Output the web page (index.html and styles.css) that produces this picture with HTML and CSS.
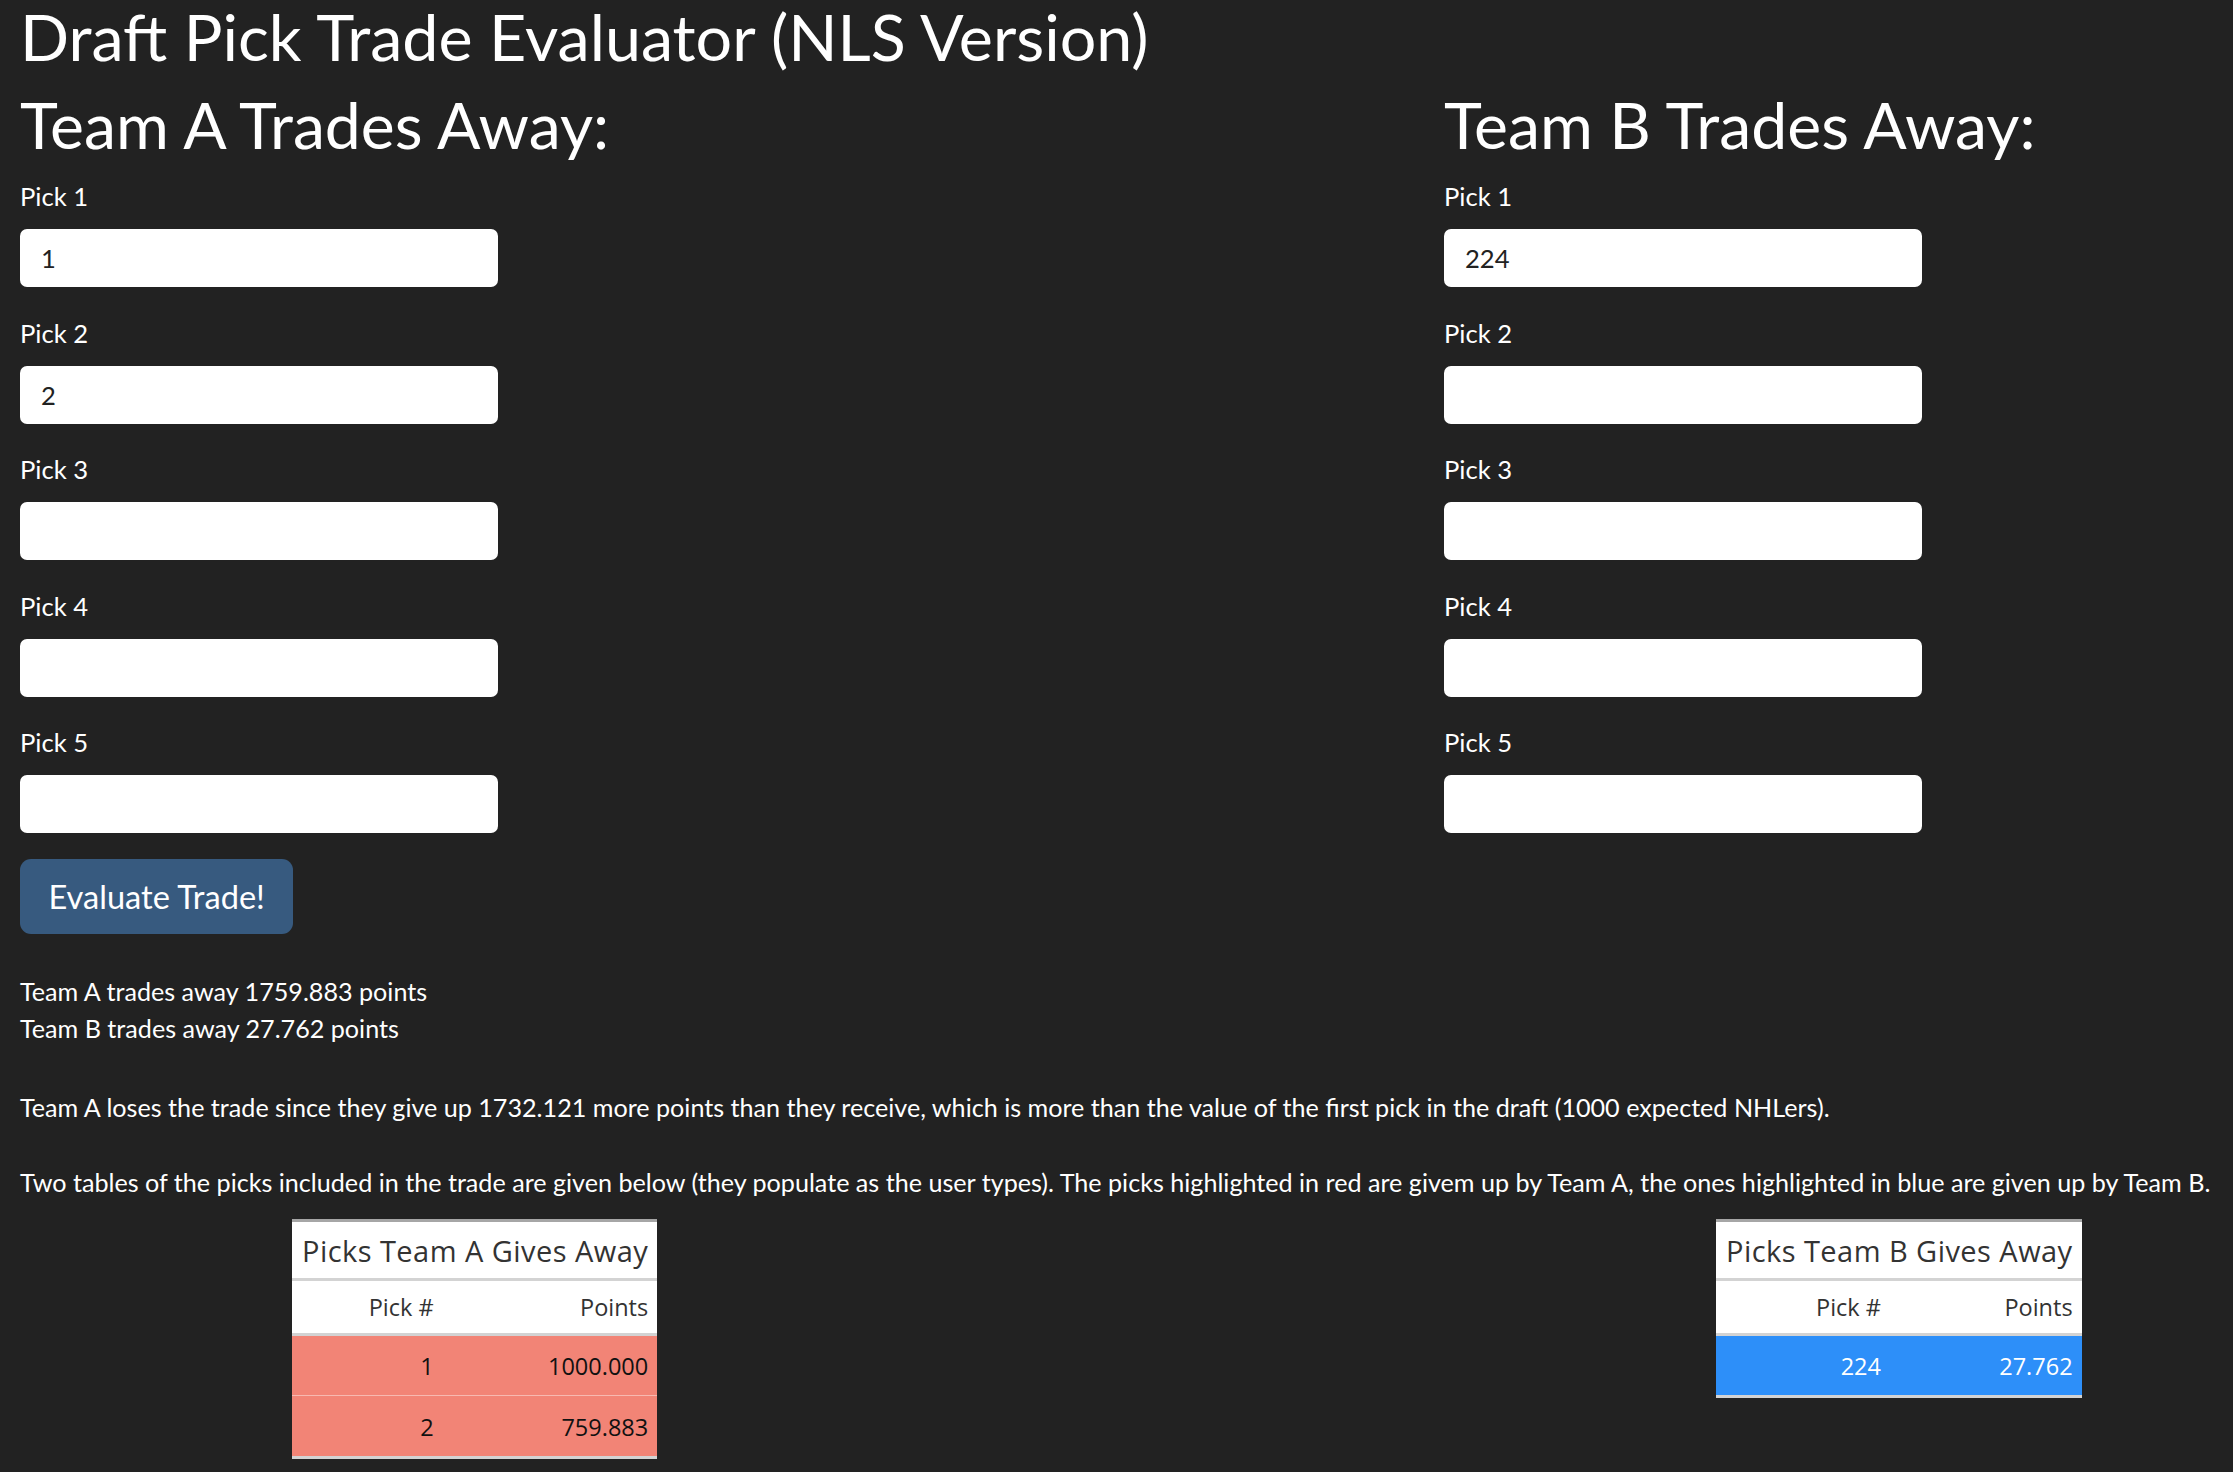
FILE: index.html
```html
<!DOCTYPE html>
<html lang="en">
<head>
<meta charset="utf-8">
<title>Draft Pick Trade Evaluator (NLS Version)</title>
<link rel="stylesheet" href="styles.css">
</head>
<body>
<div class="page">
  <h1 class="title">Draft Pick Trade Evaluator (NLS Version)</h1>
  <div class="cols">
    <div class="col">
      <h2 class="team">Team A Trades Away:</h2>
      <div class="field"><label class="lbl">Pick 1</label><input class="inp" type="text" value="1"></div>
      <div class="field"><label class="lbl">Pick 2</label><input class="inp" type="text" value="2"></div>
      <div class="field"><label class="lbl">Pick 3</label><input class="inp" type="text" value=""></div>
      <div class="field"><label class="lbl">Pick 4</label><input class="inp" type="text" value=""></div>
      <div class="field"><label class="lbl">Pick 5</label><input class="inp" type="text" value=""></div>
      <button class="btn" type="button">Evaluate Trade!</button>
    </div>
    <div class="col">
      <h2 class="team">Team B Trades Away:</h2>
      <div class="field"><label class="lbl">Pick 1</label><input class="inp" type="text" value="224"></div>
      <div class="field"><label class="lbl">Pick 2</label><input class="inp" type="text" value=""></div>
      <div class="field"><label class="lbl">Pick 3</label><input class="inp" type="text" value=""></div>
      <div class="field"><label class="lbl">Pick 4</label><input class="inp" type="text" value=""></div>
      <div class="field"><label class="lbl">Pick 5</label><input class="inp" type="text" value=""></div>
    </div>
  </div>
  <div class="results">
    <p class="para p1">Team A trades away 1759.883 points<br>Team B trades away 27.762 points</p>
    <p class="para p2">Team A loses the trade since they give up 1732.121 more points than they receive, which is more than the value of the first pick in the draft (1000 expected NHLers).</p>
    <p class="para p3">Two tables of the picks included in the trade are given below (they populate as the user types). The picks highlighted in red are givem up by Team A, the ones highlighted in blue are given up by Team B.</p>
  </div>
  <div class="cols tables">
    <div class="col">
      <table class="picks">
        <caption class="cap">Picks Team A Gives Away</caption>
        <thead><tr class="head"><th>Pick #</th><th>Points</th></tr></thead>
        <tbody>
          <tr class="row red"><td>1</td><td>1000.000</td></tr>
          <tr class="row red"><td>2</td><td>759.883</td></tr>
        </tbody>
      </table>
    </div>
    <div class="col">
      <table class="picks">
        <caption class="cap">Picks Team B Gives Away</caption>
        <thead><tr class="head"><th>Pick #</th><th>Points</th></tr></thead>
        <tbody>
          <tr class="row blue"><td>224</td><td>27.762</td></tr>
        </tbody>
      </table>
    </div>
  </div>
</div>
</body>
</html>
```

FILE: styles.css
```css
html, body {
  margin: 0;
  padding: 0;
  background: #222222;
  overflow: hidden;
}
body {
  font-family: Lato, "Liberation Sans", sans-serif;
  color: #ffffff;
  font-size: 25px;
}
.page {
  padding: 0 20px;
}
.title {
  font-weight: 400;
  font-size: 64.6px;
  line-height: 68px;
  margin: 2px 0 0;
}
.cols {
  display: grid;
  grid-template-columns: 1424px 1fr;
}
.team {
  font-weight: 400;
  font-size: 64.3px;
  line-height: 68px;
  margin: 21px 0 0;
}
.field {
  display: flex;
  flex-direction: column;
  align-items: flex-start;
}
.field:first-of-type {
  margin-top: 19px;
}
.lbl {
  font-size: 25.6px;
  line-height: 36.6px;
  margin: 0 0 14.5px;
}
.inp {
  width: 478px;
  height: 58px;
  box-sizing: border-box;
  border: none;
  border-radius: 7px;
  background: #ffffff;
  color: #222222;
  font-family: Lato, "Liberation Sans", sans-serif;
  font-size: 25.6px;
  padding: 0 21px;
  margin: 0 0 27.5px;
  outline: none;
}
.btn {
  margin-top: -2px;
  height: 75px;
  padding: 0 28.5px;
  border: none;
  border-radius: 11px;
  background: #375a7f;
  color: #ffffff;
  font-family: Lato, "Liberation Sans", sans-serif;
  font-size: 32.6px;
}
.results {
  margin-top: 39px;
}
.para {
  margin: 0;
  font-size: 25.15px;
  line-height: 37.3px;
}
.p1 {
  margin-bottom: 41px;
}
.p2 {
  margin-bottom: 38.5px;
}
.p3 {
  margin-bottom: 17.3px;
}
.tables .col {
  padding-left: 272px;
}
.picks {
  border-collapse: collapse;
  font-family: "Open Sans", "Noto Sans", sans-serif;
  color: #333333;
  background: #ffffff;
  border-bottom: 3px solid #d3d3d3;
}
.cap {
  background: #ffffff;
  border-top: 3px solid #a6a6a6;
  border-bottom: 3px solid #d3d3d3;
  font-size: 29px;
  letter-spacing: 0.45px;
  text-align: left;
  padding: 2px 9px 0 10px;
  line-height: 54px;
  white-space: nowrap;
}
.head th {
  font-weight: 400;
  font-size: 23.5px;
  text-align: right;
  line-height: 52px;
  padding: 0 9px;
  border-bottom: 3px solid #d3d3d3;
}
.row td {
  font-size: 23.5px;
  text-align: right;
  line-height: 57px;
  padding: 2px 9px 0 9px;
  color: #111111;
}
.row + .row td {
  border-top: 1px solid #f7b9b1;
  line-height: 58px;
}
.red td {
  background: #f28476;
}
.blue td {
  background: #2d8ff9;
  color: #ffffff;
}
```
